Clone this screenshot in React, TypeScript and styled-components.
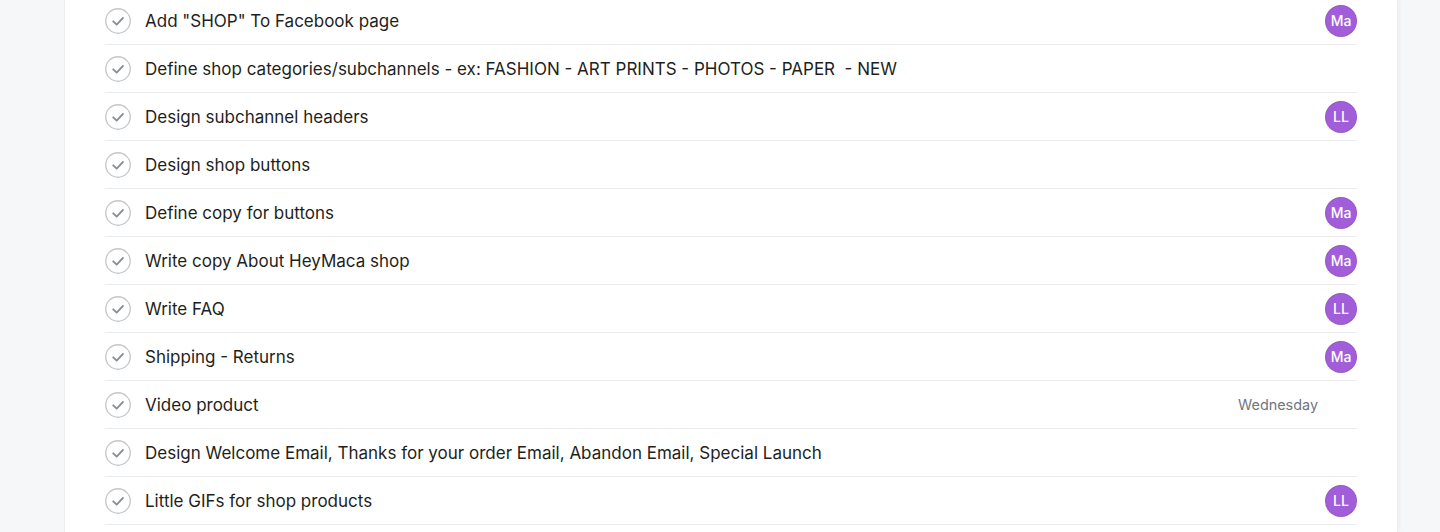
import React from "react";
import styled, { createGlobalStyle } from "styled-components";

const Global = createGlobalStyle`
  html, body { margin: 0; padding: 0; background: #f6f7f9; }
  body { font-family: Inter, "Noto Sans", sans-serif; -webkit-font-smoothing: antialiased; }
`;

const Page = styled.div`
  display: flex;
  justify-content: flex-start;
  height: 532px;
  overflow: hidden;
`;

const Panel = styled.div`
  margin-left: 65px;
  width: 1332px;
  background: #ffffff;
  box-shadow: -1px 0 0 #eceef1, 1px 0 0 #eceef1, 3px 0 3px rgba(0, 0, 0, 0.03);
  padding: 0 40px;
  box-sizing: border-box;
`;

const List = styled.ul`
  list-style: none;
  margin: -3px 0 0;
  padding: 0;
`;

const Row = styled.li`
  display: flex;
  align-items: center;
  height: 48px;
  border-bottom: 1px solid #e8ecee;
  box-sizing: border-box;
`;

const Check = styled.span`
  width: 26px;
  height: 26px;
  flex: 0 0 26px;
  display: flex;
  align-items: center;
  justify-content: center;
  margin-right: 14px;
`;

const Title = styled.span`
  flex: 1;
  font-size: 17px;
  color: #1e1f21;
  white-space: pre;
`;

const Due = styled.span`
  font-size: 14.4px;
  color: #6f7782;
  margin-right: 39px;
`;

const Avatar = styled.span`
  width: 32px;
  height: 32px;
  border-radius: 50%;
  background: #a15ed8;
  color: #fff;
  font-size: 14px;
  font-weight: 500;
  display: flex;
  align-items: center;
  justify-content: center;
  box-shadow: inset 0 0 0 1px rgba(0,0,0,0.06);
`;

const CheckIcon = () => (
  <svg width="26" height="26" viewBox="0 0 26 26" fill="none">
    <circle cx="13" cy="13" r="12.25" stroke="#c3c7cc" strokeWidth="1.3" />
    <path d="M8.2 13.3 L11.7 16.6 L18 9.9" stroke="#858b93" strokeWidth="1.75" strokeLinecap="round" strokeLinejoin="round" />
  </svg>
);

type Task = { title: string; who?: string; due?: string };

const tasks: Task[] = [
  { title: 'Add "SHOP" To Facebook page', who: "Ma" },
  { title: "Define shop categories/subchannels - ex: FASHION - ART PRINTS - PHOTOS - PAPER  - NEW" },
  { title: "Design subchannel headers", who: "LL" },
  { title: "Design shop buttons" },
  { title: "Define copy for buttons", who: "Ma" },
  { title: "Write copy About HeyMaca shop", who: "Ma" },
  { title: "Write FAQ", who: "LL" },
  { title: "Shipping - Returns", who: "Ma" },
  { title: "Video product", due: "Wednesday" },
  { title: "Design Welcome Email, Thanks for your order Email, Abandon Email, Special Launch" },
  { title: "Little GIFs for shop products", who: "LL" },
  { title: "" },
];

export default function App() {
  return (
    <Page>
      <Global />
      <Panel>
        <List>
          {tasks.map((t, i) => (
            <Row key={i}>
              <Check><CheckIcon /></Check>
              <Title>{t.title}</Title>
              {t.due && <Due>{t.due}</Due>}
              {t.who && <Avatar>{t.who}</Avatar>}
            </Row>
          ))}
        </List>
      </Panel>
    </Page>
  );
}
